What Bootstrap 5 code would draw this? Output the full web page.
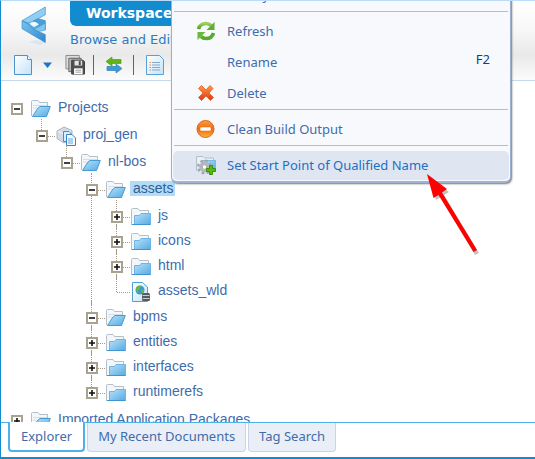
<!DOCTYPE html>
<html lang="en">
<head>
<meta charset="utf-8">
<meta name="viewport" content="width=device-width, initial-scale=1">
<title>Workspace</title>
<link href="https://cdn.jsdelivr.net/npm/bootstrap@5.3.0/dist/css/bootstrap.min.css" rel="stylesheet">
<style>
  :root { --ink: #3f6cab; --blue: #128bcf; --ui: "Noto Sans", "DejaVu Sans Condensed", sans-serif; }
  body { font: 13px/20px var(--ui); color: var(--ink); }
  .app-frame { border-left: 1px solid var(--blue); border-bottom: 2px solid var(--blue); border-top: 1px solid #b9dcfb; }
  .app-head { background: linear-gradient(#fff 0, #f8f8f8 35%, #e9e9e9 68%, #fcfcfc 100%); border-bottom: 1px solid #c5d8ee; }
  .logo-box { width: 69px; padding: 5px 0 0 19px; }
  .app-title { background: var(--blue); color: #fff; font: bold 14px/25px "DejaVu Sans", sans-serif; padding: 0 120px 0 16px; border-radius: 0 0 6px 6px; }
  .app-sub { font: 13px/20px "DejaVu Sans", sans-serif; color: #2a7cc4; padding-top: 4px; }
  .tool-row { padding: 4px 0 4px 13px; height: 30px; }
  .tool-row .btn { width: 20px; height: 22px; margin-right: 8px; }
  .tool-row .btn.drop { width: 10px; margin-right: 13px; }
  .tool-row .split { width: 1px; height: 20px; background: #2f6db5; margin-right: 11px; }
  .tree-pane { padding: 15px 0 0 10px; font: 14px/20px "Liberation Sans", Arial, sans-serif; }
  .tree-pane ul { list-style: none; margin: 0; padding: 0; }
  .tree-pane ul ul { padding: 2px 0 1px 25px; }
  .tree-pane li { position: relative; }
  .tree-line { height: 25px; position: relative; }
  .tree-pane ul ul > li::before { content: ""; position: absolute; left: 5px; top: -4px; bottom: 0; border-left: 1px dotted #a39a89; }
  .tree-pane ul ul > li:last-child::before { bottom: auto; height: 17px; }
  .tree-pane ul ul > li > .tree-line::before { content: ""; position: absolute; left: 6px; width: 13px; top: 13px; border-top: 1px dotted #a39a89; }
  .toggle { width: 12px; height: 12px; border: 2px solid #aaa290; background: #fff; position: relative; margin-right: 8px; border-radius: 0; }
  .toggle svg { display: block; }
  .gap-slot { width: 12px; margin-right: 8px; }
  .node-ico { width: 20px; height: 20px; margin-right: 4px; position: relative; }
  .tree-line a { color: var(--ink); padding: 0 2px 0 3px; line-height: 15px; margin-bottom: 2px; }
  .tree-line a.picked { background: #b0dcfa; color: #35608c; }
  .foot-tabs { border-top: 1px solid #4db2ec; padding: 0 0 5px 7px; gap: 2px; }
  .foot-tabs .btn { font: 13px/20px var(--ui); color: var(--ink); background: #eaeff7; border: 1px solid #c7d4e9; border-top: 0; border-radius: 0 0 4px 4px; padding: 3px 10px 5px; }
  .foot-tabs .btn.on { background: #fff; border: 2px solid #4db2ec; border-top: 0; margin-top: -1px; padding: 4px 11px; }
  .ctx-menu { position: absolute; left: 170px; top: -22px; width: 340px; background: #f7f9fd; border: 1px solid #9aafd2; border-bottom: 2px solid #9fb2d0; border-radius: 6px; box-shadow: 1px 1px 2px #777; z-index: 3; }
  .ctx-menu .btn { height: 29px; margin: 1px; padding: 0 19px 1px 23px; font: 13px/20px var(--ui); color: var(--ink); border: 0; border-radius: 5px; text-align: left; }
  .ctx-menu .btn.hot { background: #dfe6f2; color: #1b70c4; }
  .menu-ico { width: 20px; height: 20px; margin-right: 11px; }
  .menu-rule { height: 1px; background: #a9bfdf; margin: 0 2px 4px; }
  .hot-key { color: #123f80; margin-top: -6px; }
  .pointer { position: absolute; left: 420px; top: 168px; z-index: 4; pointer-events: none; }
</style>
</head>
<body>
<svg width="0" height="0" class="position-absolute" aria-hidden="true">
  <defs>
    <linearGradient id="gBlue" x1="0" y1="0" x2="1" y2="1"><stop offset="0" stop-color="#b8e2fa"/><stop offset="1" stop-color="#55aae2"/></linearGradient>
    <linearGradient id="gPage" x1="0" y1="0" x2="1" y2="1"><stop offset="0" stop-color="#fff"/><stop offset="1" stop-color="#c3e2fa"/></linearGradient>
    <linearGradient id="gOrange" x1="0" y1="0" x2="0" y2="1"><stop offset="0" stop-color="#f9a03c"/><stop offset=".5" stop-color="#ef6a12"/><stop offset="1" stop-color="#ffb02e"/></linearGradient>
    <linearGradient id="gGreen" x1="0" y1="0" x2="0" y2="1"><stop offset="0" stop-color="#9bcf55"/><stop offset="1" stop-color="#4a9e26"/></linearGradient>
    <linearGradient id="gRed" x1="0" y1="0" x2="0" y2="1"><stop offset="0" stop-color="#ff9b45"/><stop offset="1" stop-color="#e2350f"/></linearGradient>
    <linearGradient id="gFin" x1="0" y1="0" x2="1" y2="1"><stop offset="0" stop-color="#7cc3ee"/><stop offset="1" stop-color="#2f86cc"/></linearGradient>
    <symbol id="open" viewBox="0 0 20 20"><path d="M.5 17V2.500Q.5 1.500 1.500 1.500H7L8.500 3.500H16.500V9" fill="#f3f7fa" stroke="#b3bfc9"/><path d="M2 6.500H16M2 9H6" stroke="#d5dee6"/><path d="M7 9 9 7.500H19.300L15.500 17.500H1.500Z" fill="url(#gBlue)" stroke="#459bd5"/></symbol>
    <symbol id="shut" viewBox="0 0 20 20"><path d="M.5 17V2.500Q.5 1.500 1.500 1.500H7L8.500 3.500H17.500V8" fill="#f3f7fa" stroke="#b3bfc9"/><path d="M3.500 17.500V8.500H8.500L10 6.500H19.500V17.500Z" fill="url(#gBlue)" stroke="#6db5e4"/><path d="M.5 17.500H19.500" stroke="#3f95d0"/></symbol>
    <symbol id="proj" viewBox="0 0 20 20"><path d="M1 5 8 1 16 4.500V13L8 17 1 12.500Z" fill="#d4dce5" stroke="#aab6c3"/><path d="M2 5.500 8 8 15 5" fill="none" stroke="#f6f8fa"/><path d="M7.500 5.500H13L15.500 8V15.500H7.500Z" fill="#d9efff" stroke="#3c93d2"/><path d="M10.500 8.500H16L19.500 12V19.500H10.500Z" fill="#f2faff" stroke="#2f88cb"/><path d="M12 13H17M12 15H17M12 17H17" stroke="#64a9dc"/></symbol>
    <symbol id="web" viewBox="0 0 20 20"><path d="M1.500.5H11.500L16.500 5V19.500H1.500Z" fill="url(#gPage)" stroke="#4f9ed6"/><circle cx="9" cy="8" r="4.500" fill="#3897d6"/><path d="M5 6Q7 3 10 4L9 7 7 8 8 11Q5 10 5 6M10 8 13 7Q13 10 11 12Z" fill="#69ba45"/><rect x="11" y="11" width="8" height="8" rx="1.500" fill="#565b60"/><path d="M11.500 13.500H18.500M11.500 16.500H18.500" stroke="#c9cdd0"/></symbol>
    <symbol id="plus" viewBox="0 0 8 8"><path d="M1 4H7M4 1V7" stroke="#111" stroke-width="1.600"/></symbol>
    <symbol id="minus" viewBox="0 0 8 8"><path d="M1 4H7" stroke="#111" stroke-width="1.600"/></symbol>
  </defs>
</svg>

<div class="app-frame position-relative vh-100 overflow-hidden d-flex flex-column bg-white">
  <header class="app-head flex-shrink-0">
    <div class="d-flex">
      <div class="logo-box">
        <svg width="30" height="42" viewBox="0 0 30 42" role="img" aria-label="Workspace logo">
          <path d="M9 36Q18 32 25 37L20 39Z" fill="#cfe5f4" opacity=".8"/>
          <path d="M2 14.700 14 19 25.300 14.300V24L16.700 25.500 2 22.700Z" fill="#5bade3"/>
          <path d="M2 14.700 25.300 1V8.700L13 15.500 8 17Z" fill="#8fcff3" stroke="#3d93ce" stroke-width=".7"/>
          <path d="M13 15 18 12.500 25.300 14.500V24L20 21.500 18 17Z" fill="#4a9fd9" stroke="#3a8ecb" stroke-width=".5"/>
          <path d="M10 18.500 15 16 19 18.200 14 21Z" fill="#eef8fe"/>
          <path d="M2 14.700 9 18.500 14 23.500 25.300 28.500V36.500L2 22.700Z" fill="url(#gFin)" stroke="#2e86c9" stroke-width=".6"/>
          <path d="M14 23.500 25.300 17V24L19 25.600Z" fill="#7fc5ee" stroke="#3a8ecb" stroke-width=".5"/>
        </svg>
      </div>
      <div>
        <h1 class="app-title m-0 text-nowrap">Workspace</h1>
        <p class="app-sub m-0 text-nowrap">Browse and Edit</p>
      </div>
    </div>
    <div class="tool-row d-flex align-items-center" role="toolbar" aria-label="Documents">
      <button class="btn p-0 border-0 d-flex" aria-label="New"><svg width="20" height="22" viewBox="0 0 20 22"><path d="M.5 1.500H13.500L17.500 5.500V20.500H.5Z" fill="url(#gPage)" stroke="#4b93cd"/><path d="M13.500 1.500V5.500H17.500" fill="#fff" stroke="#4b93cd"/></svg></button>
      <button class="btn drop p-0 border-0 d-flex align-items-center" aria-label="More new items"><svg width="10" height="8" viewBox="0 0 10 8"><path d="M1 1.500H10L5.500 7Z" fill="#1b75c9"/></svg></button>
      <button class="btn p-0 border-0 d-flex" aria-label="Save all"><svg width="21" height="22" viewBox="0 0 21 22"><path d="M1 1H15V4H5V15H1Z" fill="#ddd" stroke="#888"/><path d="M4 4H17V8H8V18H4Z" fill="#bbb" stroke="#666"/><path d="M7 6H19L20.500 7.500V20.500H7Z" fill="#505050" stroke="#3b3b3b"/><rect x="10" y="6.500" width="8" height="5" fill="#e4e4e4"/><rect x="14.500" y="7" width="2" height="4" fill="#444"/><rect x="9.500" y="14.500" width="9" height="6" fill="#fff"/><path d="M11 16.500H17M11 18.500H17" stroke="#999"/></svg></button>
      <span class="split"></span>
      <button class="btn p-0 border-0 d-flex" aria-label="Synchronize"><svg width="18" height="22" viewBox="0 0 18 22"><path d="M1 7.500 7 3V5.500H16V9.500H7V12Z" fill="#62b416" stroke="#4e9d0f" stroke-width=".7"/><path d="M17 14.500 11 10V12.500H2V16.500H11V19Z" fill="#3c9cd2" stroke="#2b82b7" stroke-width=".7"/></svg></button>
      <span class="split"></span>
      <button class="btn p-0 border-0 d-flex" aria-label="Details"><svg width="20" height="22" viewBox="0 0 20 22"><path d="M1.500 1.500H14.500L18.500 5.500V20.500H1.500Z" fill="url(#gPage)" stroke="#5a9fd5"/><path d="M7 8.500H15M7 11H15M7 13.500H15M7 16H15" stroke="#87a9c6"/><path d="M4.500 8.500H6M4.500 11H6M4.500 13.500H6M4.500 16H6" stroke="#e98d50"/></svg></button>
    </div>
  </header>

  <main class="tree-pane flex-grow-1 overflow-hidden">
    <ul>
      <li>
        <div class="tree-line d-flex align-items-center"><button class="toggle p-0" aria-label="Collapse Projects"><svg width="8" height="8"><use href="#minus"/></svg></button><svg class="node-ico"><use href="#open"/></svg><a href="#" class="text-decoration-none">Projects</a></div>
        <ul><li>
          <div class="tree-line d-flex align-items-center"><button class="toggle p-0" aria-label="Collapse proj_gen"><svg width="8" height="8"><use href="#minus"/></svg></button><svg class="node-ico"><use href="#proj"/></svg><a href="#" class="text-decoration-none">proj_gen</a></div>
          <ul><li>
            <div class="tree-line d-flex align-items-center"><button class="toggle p-0" aria-label="Collapse nl-bos"><svg width="8" height="8"><use href="#minus"/></svg></button><svg class="node-ico"><use href="#open"/></svg><a href="#" class="text-decoration-none">nl-bos</a></div>
            <ul>
              <li>
                <div class="tree-line d-flex align-items-center"><button class="toggle p-0" aria-label="Collapse assets"><svg width="8" height="8"><use href="#minus"/></svg></button><svg class="node-ico"><use href="#open"/></svg><a href="#" class="picked text-decoration-none">assets</a></div>
                <ul>
                  <li><div class="tree-line d-flex align-items-center"><button class="toggle p-0" aria-label="Expand js"><svg width="8" height="8"><use href="#plus"/></svg></button><svg class="node-ico"><use href="#shut"/></svg><a href="#" class="text-decoration-none">js</a></div></li>
                  <li><div class="tree-line d-flex align-items-center"><button class="toggle p-0" aria-label="Expand icons"><svg width="8" height="8"><use href="#plus"/></svg></button><svg class="node-ico"><use href="#shut"/></svg><a href="#" class="text-decoration-none">icons</a></div></li>
                  <li><div class="tree-line d-flex align-items-center"><button class="toggle p-0" aria-label="Expand html"><svg width="8" height="8"><use href="#plus"/></svg></button><svg class="node-ico"><use href="#shut"/></svg><a href="#" class="text-decoration-none">html</a></div></li>
                  <li><div class="tree-line d-flex align-items-center"><span class="gap-slot"></span><svg class="node-ico"><use href="#web"/></svg><a href="#" class="text-decoration-none">assets_wld</a></div></li>
                </ul>
              </li>
              <li><div class="tree-line d-flex align-items-center"><button class="toggle p-0" aria-label="Collapse bpms"><svg width="8" height="8"><use href="#minus"/></svg></button><svg class="node-ico"><use href="#open"/></svg><a href="#" class="text-decoration-none">bpms</a></div></li>
              <li><div class="tree-line d-flex align-items-center"><button class="toggle p-0" aria-label="Expand entities"><svg width="8" height="8"><use href="#plus"/></svg></button><svg class="node-ico"><use href="#shut"/></svg><a href="#" class="text-decoration-none">entities</a></div></li>
              <li><div class="tree-line d-flex align-items-center"><button class="toggle p-0" aria-label="Expand interfaces"><svg width="8" height="8"><use href="#plus"/></svg></button><svg class="node-ico"><use href="#shut"/></svg><a href="#" class="text-decoration-none">interfaces</a></div></li>
              <li><div class="tree-line d-flex align-items-center"><button class="toggle p-0" aria-label="Expand runtimerefs"><svg width="8" height="8"><use href="#plus"/></svg></button><svg class="node-ico"><use href="#shut"/></svg><a href="#" class="text-decoration-none">runtimerefs</a></div></li>
            </ul>
          </li></ul>
        </li></ul>
      </li>
      <li><div class="tree-line d-flex align-items-center"><button class="toggle p-0" aria-label="Expand Imported Application Packages"><svg width="8" height="8"><use href="#plus"/></svg></button><svg class="node-ico"><use href="#open"/></svg><a href="#" class="text-decoration-none text-nowrap">Imported Application Packages</a></div></li>
    </ul>
  </main>

  <nav class="foot-tabs d-flex align-items-start flex-shrink-0">
    <button class="btn on">Explorer</button>
    <button class="btn">My Recent Documents</button>
    <button class="btn">Tag Search</button>
  </nav>

  <div class="ctx-menu d-flex flex-column" role="menu">
    <button class="btn d-flex align-items-center" role="menuitem"><span class="menu-ico"></span>Modify</button>
    <div class="menu-rule"></div>
    <button class="btn d-flex align-items-center" role="menuitem"><svg class="menu-ico" viewBox="0 0 20 20"><path d="M2.500 8Q4 2.500 10 2.500 13 2.500 15 4.500" fill="none" stroke="url(#gGreen)" stroke-width="3.600"/><path d="M18.500 1V9H10.500Z" fill="#5fae32"/><path d="M17.500 12Q16 17.500 10 17.500 7 17.500 5 15.500" fill="none" stroke="#59a92e" stroke-width="3.600"/><path d="M1.500 19V11H9.500Z" fill="#6cb83a"/></svg>Refresh</button>
    <button class="btn d-flex align-items-center" role="menuitem"><span class="menu-ico"></span>Rename<span class="hot-key ms-auto">F2</span></button>
    <button class="btn d-flex align-items-center" role="menuitem"><svg class="menu-ico" viewBox="0 0 20 20"><path d="M5.500 2.500 10 7 14 2.500 17 5.500 13 10 17.500 14.500 14.500 17.500 10 13 5.500 17.500 2.500 14.500 7 10 2.500 5.500Z" fill="url(#gRed)" stroke="#dc5a26" stroke-width=".8" stroke-linejoin="round"/></svg>Delete</button>
    <div class="menu-rule"></div>
    <button class="btn d-flex align-items-center" role="menuitem"><svg class="menu-ico" viewBox="0 0 20 20"><circle cx="9.500" cy="10" r="8.500" fill="url(#gOrange)" stroke="#e0661a"/><rect x="4" y="8" width="11" height="4" rx="1" fill="#fff" stroke="#e2752d" stroke-width=".6"/></svg>Clean Build Output</button>
    <div class="menu-rule"></div>
    <button class="btn hot d-flex align-items-center text-nowrap" role="menuitem"><svg class="menu-ico" viewBox="0 0 20 20"><path d="M.5 16V1.500H7L8.500 3H17.500V15" fill="#e8f0f6" stroke="#b3c0cc"/><path d="M7 5.500H19.500V15H7Z" fill="url(#gBlue)" stroke="#7bb9e4"/><circle cx="8.500" cy="12" r="6.300" fill="none" stroke="#a0a5aa" stroke-width="2.400" stroke-dasharray="2.600 2.350"/><circle cx="8.500" cy="12" r="4" fill="#f4f5f6" stroke="#b4b8bc" stroke-width="2.800"/><circle cx="8.500" cy="12" r="2.300" fill="#fff" stroke="#8f9499" stroke-width=".8"/><path d="M13.500 10.500H16.500V13.500H19.500V16.500H16.500V19.500H13.500V16.500H10.500V13.500H13.500Z" fill="#5cb80e" stroke="#38900a"/></svg>Set Start Point of Qualified Name</button>
  </div>

  <svg class="pointer" width="64" height="92" viewBox="0 0 64 92" aria-hidden="true">
    <path d="M9 8 28 23 23 26 58 84 54 86 20 28 15 31Z" fill="#777" opacity=".45"/>
    <path d="M6 5 26 20 21 23.500 56 81 52.500 83 17.500 26 12.500 29Z" fill="#f00"/>
  </svg>
</div>
<script src="https://cdn.jsdelivr.net/npm/bootstrap@5.3.0/dist/js/bootstrap.bundle.min.js"></script>
</body>
</html>
